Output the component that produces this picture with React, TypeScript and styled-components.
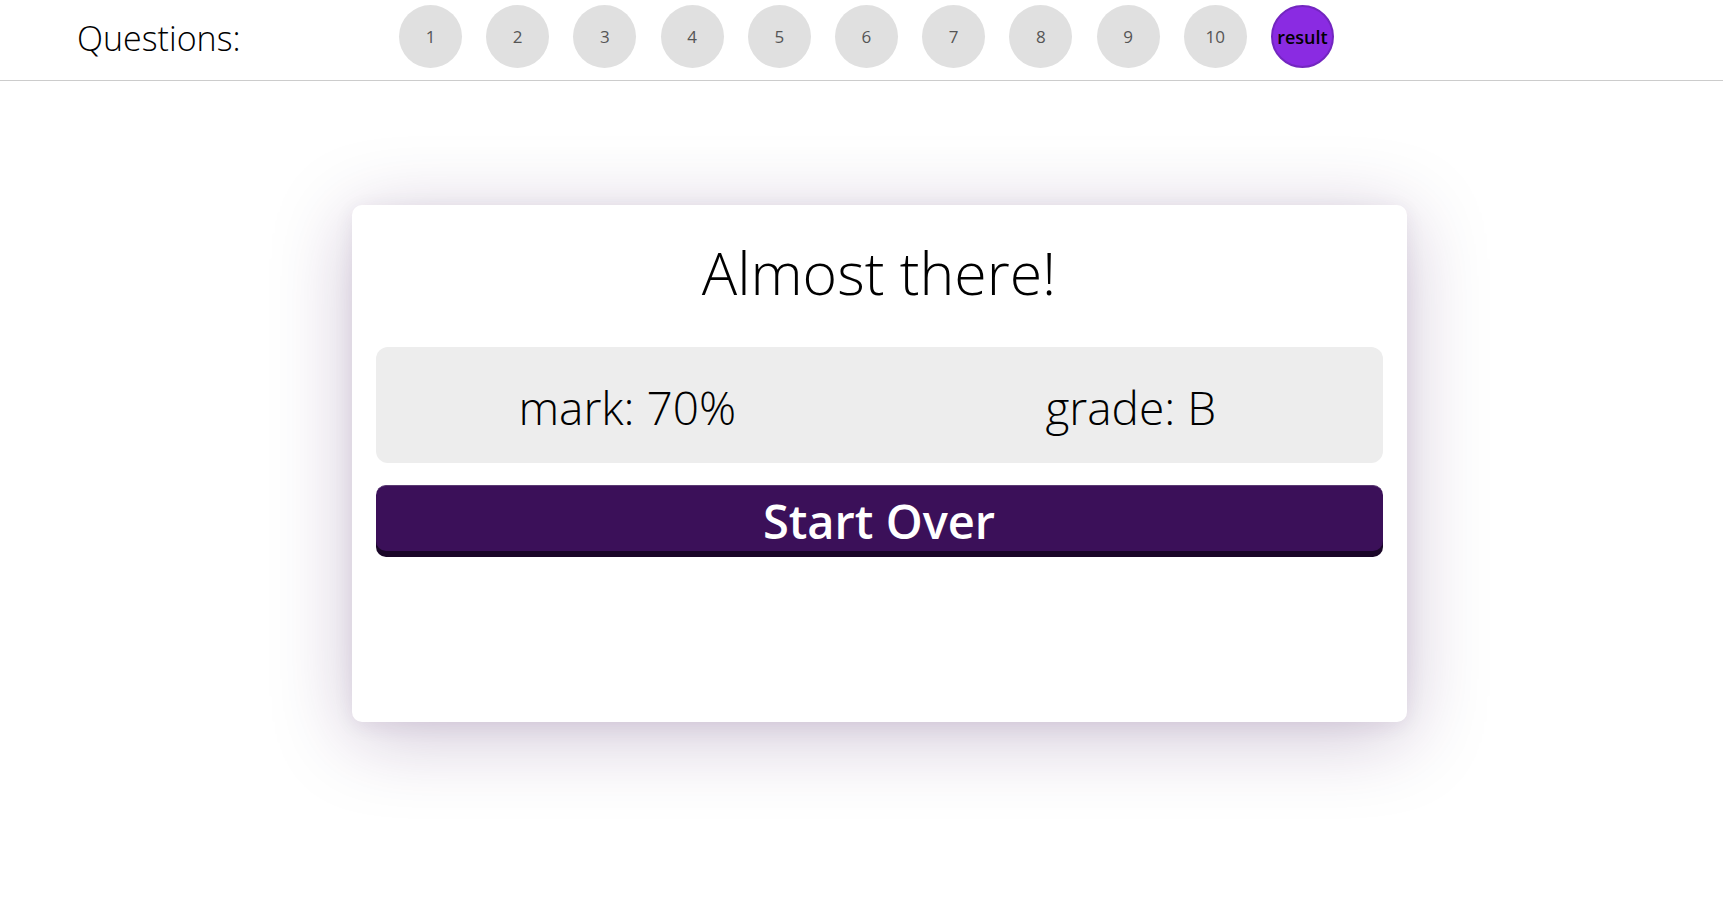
import React from "react";
import styled, { createGlobalStyle } from "styled-components";

const GlobalStyle = createGlobalStyle`
  html, body {
    margin: 0;
    padding: 0;
    background: #ffffff;
    font-family: "Open Sans", "Segoe UI", sans-serif;
    color: #000;
  }
  * {
    box-sizing: border-box;
  }
`;

const Header = styled.header`
  display: flex;
  align-items: flex-start;
  height: 81px;
  padding-top: 5px;
  border-bottom: 1px solid #cccccc;
`;

const Title = styled.h2`
  flex: 0 0 399px;
  margin: 0;
  padding: 4px 0 0 77px;
  font-size: 34px;
  font-weight: 300;
  line-height: 58px;
`;

const Steps = styled.nav`
  display: flex;
  gap: 24.2px;
`;

interface StepProps {
  active?: boolean;
}

const Step = styled.button<StepProps>`
  width: 63px;
  height: 63px;
  border-radius: 50%;
  display: flex;
  justify-content: center;
  align-items: center;
  padding: 0;
  font-family: inherit;
  font-size: ${(props) => (props.active ? "18px" : "17px")};
  font-weight: ${(props) => (props.active ? 600 : 400)};
  color: ${(props) => (props.active ? "#000" : "#555")};
  background-color: ${(props) => (props.active ? "#8a2be2" : "#e0e0e0")};
  border: ${(props) => (props.active ? "2px solid #7326c0" : "none")};
  cursor: pointer;
`;

const Main = styled.main`
  display: flex;
  justify-content: center;
  padding: 124px 0 180px 35px;
`;

const Card = styled.section`
  width: 1055px;
  height: 517px;
  padding: 24px;
  display: flex;
  flex-direction: column;
  background: #ffffff;
  border-radius: 10px;
  box-shadow: 0 14px 80px rgba(59, 16, 89, 0.25), 0 4px 20px rgba(59, 16, 89, 0.07);
`;

const Heading = styled.h1`
  margin: 5px 0 36px;
  text-align: center;
  font-size: 59px;
  font-weight: 300;
  line-height: 77px;
`;

const Score = styled.div`
  display: flex;
  height: 116px;
  align-items: center;
  background: #ededed;
  border-radius: 12px;
`;

const ScoreItem = styled.p`
  flex: 1;
  margin: 0;
  padding-top: 4px;
  text-align: center;
  font-size: 46px;
  font-weight: 300;
`;

const StartButton = styled.button`
  margin-top: 22px;
  height: 66px;
  border: none;
  border-top: 1px solid #5a3a72;
  border-radius: 10px;
  background: #3b1059;
  box-shadow: 0 6px 0 #1a0628;
  color: #ffffff;
  font-family: inherit;
  font-size: 47px;
  font-weight: 600;
  line-height: 62px;
  padding: 4px 0 0;
  cursor: pointer;
`;

const steps = ["1", "2", "3", "4", "5", "6", "7", "8", "9", "10"];

export default function App() {
  return (
    <>
      <GlobalStyle />
      <Header>
        <Title>Questions:</Title>
        <Steps>
          {steps.map((s) => (
            <Step key={s}>{s}</Step>
          ))}
          <Step active>result</Step>
        </Steps>
      </Header>
      <Main>
        <Card>
          <Heading>Almost there!</Heading>
          <Score>
            <ScoreItem>mark: 70%</ScoreItem>
            <ScoreItem>grade: B</ScoreItem>
          </Score>
          <StartButton>Start Over</StartButton>
        </Card>
      </Main>
    </>
  );
}
